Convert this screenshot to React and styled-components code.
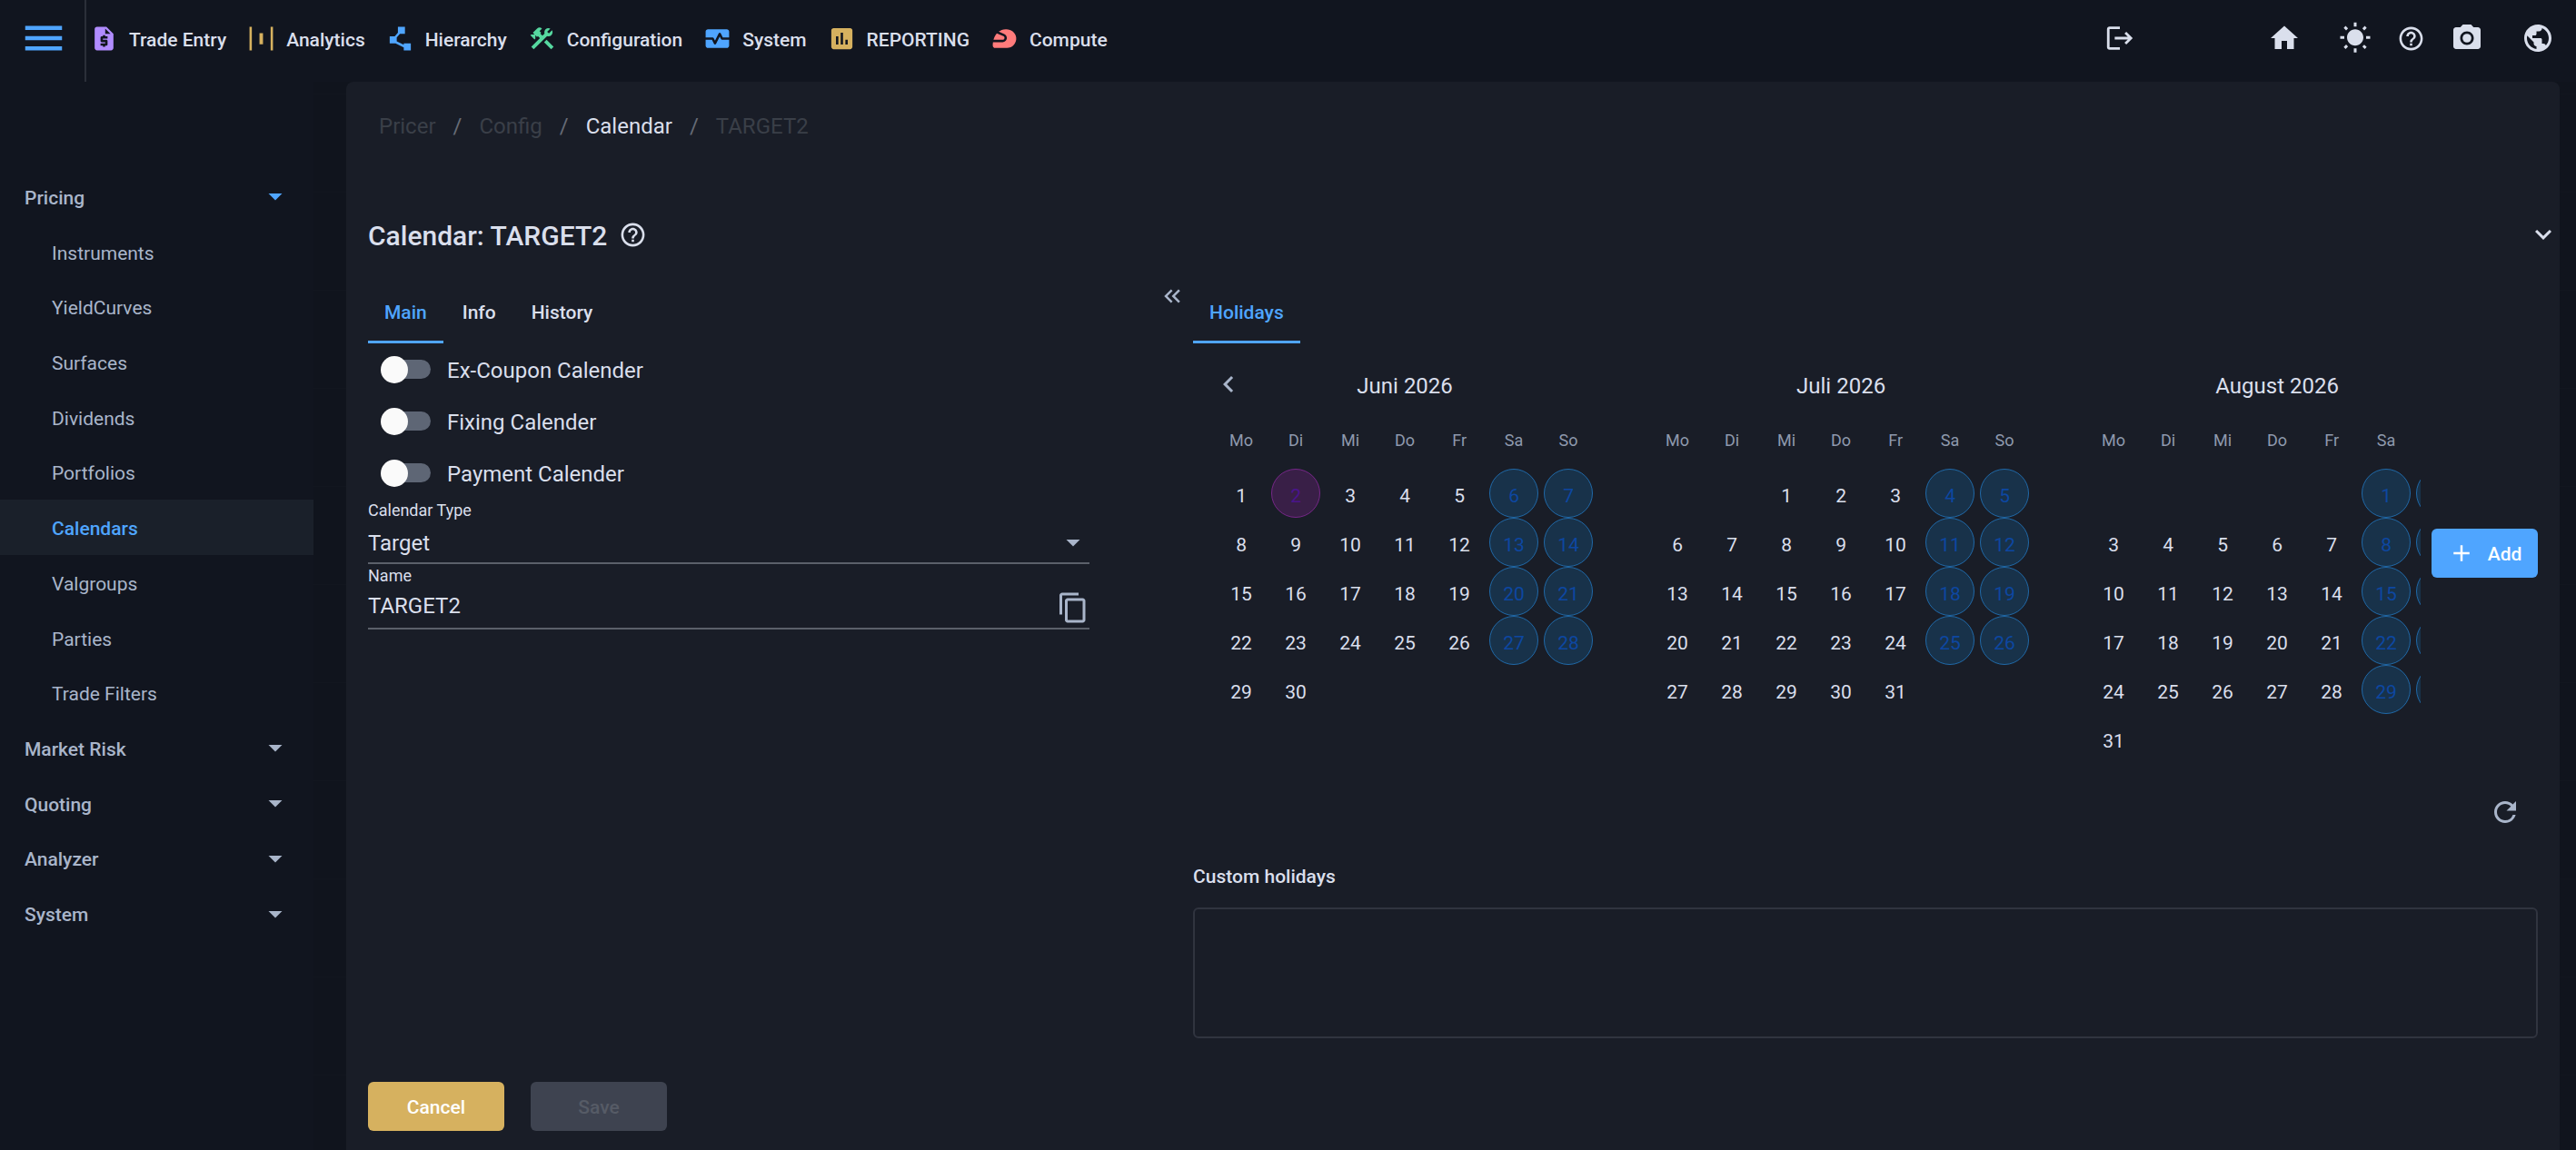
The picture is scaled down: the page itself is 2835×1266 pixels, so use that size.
import React from 'react'
import styled, { createGlobalStyle } from 'styled-components'
import {
  MdMenu,
  MdRequestQuote,
  MdConstruction,
  MdMonitorHeart,
  MdAssessment,
  MdSportsMotorsports,
  MdLogout,
  MdHome,
  MdWbSunny,
  MdHelpOutline,
  MdPhotoCamera,
  MdPublic,
  MdArrowDropDown,
  MdExpandMore,
  MdChevronLeft,
  MdContentCopy,
  MdRefresh,
  MdAdd,
  MdKeyboardDoubleArrowLeft,
} from 'react-icons/md'

const colors = {
  page: '#10141d',
  bar: '#11151f',
  panel: '#191d27',
  text: '#dadfec',
  soft: '#a9b5ca',
  muted: '#3a3f48',
  line: '#5b606a',
  blue: '#4fa5ff',
  gold: '#d6b15f',
  purple: '#b18cff',
  green: '#56d8a0',
  red: '#ff7b7b',
}

const GlobalStyle = createGlobalStyle`
  *,
  *::before,
  *::after {
    box-sizing: border-box;
  }

  body {
    margin: 0;
    background: ${colors.page};
    color: ${colors.text};
    font-family: Roboto, 'Liberation Sans', sans-serif;
    font-size: 24px;
  }

  button,
  input,
  select,
  textarea {
    font: inherit;
    color: inherit;
  }

  svg {
    display: block;
    flex: none;
  }
`

const Page = styled.div`
  display: flex;
  flex-direction: column;
  min-height: 100vh;
`

const TopBar = styled.header`
  display: flex;
  align-items: center;
  height: 90px;
  padding-right: 24px;
  padding-bottom: 6px;
  background: ${colors.bar};
`

const MenuSlot = styled.div`
  display: flex;
  align-items: center;
  height: 90px;
  margin-bottom: -6px;
  padding: 0 18px 6px 21px;
  border-right: 2px solid #2b2f39;
`

const IconButton = styled.button`
  display: flex;
  align-items: center;
  justify-content: center;
  padding: 0;
  border: 0;
  background: none;
  color: ${({ $color }) => $color || colors.text};
  cursor: pointer;
`

const AppLinks = styled.nav`
  display: flex;
  align-items: center;
  gap: 23px;
  padding-left: 4px;
`

const AppLink = styled.a`
  display: flex;
  align-items: center;
  gap: 12px;
  color: ${colors.text};
  font-size: 21px;
  font-weight: 500;
  text-decoration: none;

  svg {
    color: ${({ $color }) => $color};
  }

  span {
    padding-top: 3px;
  }
`

const Tools = styled.div`
  display: flex;
  align-items: center;
  gap: ${({ $gap }) => $gap}px;
`

const Logout = styled(IconButton)`
  margin: 0 146px 0 auto;
`

const Body = styled.div`
  display: flex;
  flex: 1;
  padding-right: 18px;
  background: repeating-linear-gradient(
    to bottom,
    transparent 0 13px,
    #12161f 13px 14px,
    transparent 14px 108px
  );
`

const Sidebar = styled.nav`
  flex: none;
  width: 345px;
  margin-right: 36px;
  padding-top: 96px;
  background: ${colors.bar};
`

const SideList = styled.ul`
  display: grid;
  grid-auto-rows: 1fr;
  height: 850px;
  margin: 0;
  padding: 0;
  list-style: none;
`

const SideLink = styled.a`
  display: flex;
  align-items: center;
  justify-content: space-between;
  height: 100%;
  padding: 0 24px 0 ${({ $sub }) => ($sub ? 57 : 27)}px;
  background: ${({ $active }) => ($active ? '#1a202a' : 'none')};
  color: ${({ $active }) => ($active ? colors.blue : colors.soft)};
  font-size: 21px;
  font-weight: ${({ $sub, $active }) => ($sub && !$active ? 400 : 500)};
  text-decoration: none;

  span {
    padding-top: 3px;
  }

  svg {
    color: ${({ $open }) => ($open ? colors.blue : colors.soft)};
  }
`

const Panel = styled.main`
  display: flex;
  flex: 1;
  flex-direction: column;
  min-width: 0;
  padding: 30px 24px 21px;
  border-radius: 8px 8px 0 0;
  background: ${colors.panel};
`

const Crumbs = styled.ol`
  display: flex;
  gap: 19px;
  margin: 0;
  padding: 0 0 0 12px;
  line-height: 38px;
  list-style: none;

  a {
    color: ${colors.text};
    text-decoration: none;
  }
`

const Crumb = styled.li`
  color: ${colors.muted};

  & + &::before {
    content: '/';
    margin-right: 19px;
    color: #666b76;
  }
`

const TitleRow = styled.div`
  display: flex;
  align-items: center;
  height: 48px;
  margin-top: 76px;
`

const Title = styled.h1`
  margin: 0 13px 0 0;
  padding-top: 3px;
  font-size: 30px;
  font-weight: 500;
`

const Toggle = styled(IconButton)`
  margin: 0 -24px 0 auto;
`

const Columns = styled.div`
  display: grid;
  grid-template-columns: 22fr 114px 41fr;
  margin-top: 24px;
`

const Column = styled.section`
  min-width: 0;
`

const Splitter = styled.div`
  display: flex;
  justify-content: flex-end;
  align-items: flex-start;
  padding: 5px 8px 0 0;
`

const Tabs = styled.div`
  display: flex;
  gap: 3px;
  height: 72px;
`

const Tab = styled.button`
  padding: 7px 18px 0;
  border: 0;
  border-bottom: 3px solid
    ${({ $active }) => ($active ? colors.blue : 'transparent')};
  background: none;
  color: ${({ $active }) => ($active ? colors.blue : colors.text)};
  font-size: 21px;
  font-weight: 500;
  cursor: pointer;
`

const SwitchRow = styled.label`
  display: flex;
  align-items: center;
  gap: 18px;
  height: 57px;
  padding-left: 18px;

  span {
    padding-top: 3px;
  }
`

const Switch = styled.input`
  display: flex;
  align-items: center;
  width: 51px;
  height: 21px;
  margin: 0;
  border-radius: 11px;
  background: #5e6675;
  appearance: none;

  &::before {
    content: '';
    width: 30px;
    height: 30px;
    margin-left: -4px;
    flex: none;
    border-radius: 50%;
    background: #fafafa;
  }
`

const Field = styled.div`
  display: flex;
  flex-direction: column;
  height: 72px;
  border-bottom: 2px solid ${colors.line};
`

const FieldLabel = styled.label`
  padding-top: 1px;
  font-size: 18px;
  line-height: 24px;
`

const FieldValue = styled.div`
  display: flex;
  flex: 1;
  align-items: center;
  min-height: 0;

  svg {
    color: ${colors.soft};
  }
`

const Select = styled.select`
  flex: 1;
  align-self: stretch;
  margin-right: -36px;
  padding: 2px 36px 0 0;
  border: 0;
  background: none;
  appearance: none;
`

const Input = styled.input`
  flex: 1;
  min-width: 0;
  padding: 0 0 4px;
  border: 0;
  background: none;
`

const Holidays = styled.div`
  display: flex;
  align-items: center;
  gap: 12px;
`

const Months = styled.div`
  display: flex;
  flex: 1;
  gap: 60px;
  min-width: 0;
  padding-left: 23px;
  overflow-x: auto;
  scrollbar-width: none;
`

const Month = styled.table`
  flex: none;
  width: 420px;
  table-layout: fixed;
  border-collapse: collapse;
  font-size: 21px;
  text-align: center;

  caption {
    padding: 6px 0 0;
    font-size: 24px;
    line-height: 82px;
  }

  th {
    height: 50px;
    padding: 0 0 14px;
    color: #8e99ad;
    font-size: 18px;
    font-weight: 400;
  }

  td {
    height: 54px;
    padding: 0 3px;
  }
`

const Caption = styled.div`
  display: grid;
  grid-template-columns: 1fr auto 1fr;
  align-items: center;

  button {
    justify-self: start;
    margin-left: -2px;
    padding-bottom: 4px;
    color: ${colors.soft};
  }
`

const dayFills = {
  plain: ['transparent', 'transparent', colors.text],
  off: ['#2069a8', '#18324a', '#0d47a1'],
  holiday: ['#762788', '#391f47', '#4a148c'],
}

const Day = styled.div`
  width: 54px;
  height: 54px;
  padding-top: 4px;
  border: 1px solid ${({ $kind }) => dayFills[$kind][0]};
  border-radius: 50%;
  background: ${({ $kind }) => dayFills[$kind][1]};
  color: ${({ $kind }) => dayFills[$kind][2]};
  line-height: 51px;
`

const Button = styled.button`
  display: flex;
  align-items: center;
  justify-content: center;
  flex: none;
  gap: 14px;
  width: ${({ $width }) => $width || 150}px;
  height: 54px;
  padding: 0;
  border: 0;
  border-radius: 6px;
  background: ${({ $bg }) => $bg};
  color: #fff;
  font-size: 21px;
  font-weight: 500;
  cursor: pointer;

  span {
    padding-top: 2px;
  }

  &:disabled {
    color: #565b66;
  }
`

const RefreshRow = styled.div`
  display: flex;
  justify-content: flex-end;
  padding: 36px 18px;
`

const SectionLabel = styled.label`
  display: block;
  padding: 2px 0 19px;
  font-size: 21px;
  font-weight: 500;
  line-height: 30px;
`

const CustomBox = styled.textarea`
  display: block;
  width: 100%;
  height: 144px;
  padding: 12px;
  border: 2px solid #30343f;
  border-radius: 6px;
  background: none;
  resize: none;
`

const Actions = styled.div`
  display: flex;
  gap: 29px;
  margin-top: auto;
`

const AnalyticsIcon = () => (
  <svg width='31' height='31' viewBox='0 0 24 24' fill='currentColor'>
    <path d='M2 2h2v20H2zM20 2h2v20h-2zM10.5 7.300h3v9.600h-3z' />
  </svg>
)

const HierarchyIcon = () => (
  <svg width='31' height='31' viewBox='0 0 24 24' fill='currentColor'>
    <path d='M15 16v1.260l-6-3v-3.170L11.700 8H16V2h-6v4.900L7.300 10H3v6h5l7 3.500V22h6v-6z' />
  </svg>
)

const apps = [
  ['Trade Entry', MdRequestQuote, colors.purple],
  ['Analytics', AnalyticsIcon, colors.gold],
  ['Hierarchy', HierarchyIcon, colors.blue],
  ['Configuration', MdConstruction, colors.green],
  ['System', MdMonitorHeart, colors.blue],
  ['REPORTING', MdAssessment, colors.gold],
  ['Compute', MdSportsMotorsports, colors.red],
]

const sideItems = [
  { label: 'Pricing', open: true },
  { label: 'Instruments', sub: true },
  { label: 'YieldCurves', sub: true },
  { label: 'Surfaces', sub: true },
  { label: 'Dividends', sub: true },
  { label: 'Portfolios', sub: true },
  { label: 'Calendars', sub: true, active: true },
  { label: 'Valgroups', sub: true },
  { label: 'Parties', sub: true },
  { label: 'Trade Filters', sub: true },
  { label: 'Market Risk' },
  { label: 'Quoting' },
  { label: 'Analyzer' },
  { label: 'System' },
]

const weekdays = ['Mo', 'Di', 'Mi', 'Do', 'Fr', 'Sa', 'So']

// offset: number of empty cells before the first day, weeks start on monday
const months = [
  { name: 'Juni 2026', offset: 0, days: 30, holidays: [2] },
  { name: 'Juli 2026', offset: 2, days: 31, holidays: [] },
  { name: 'August 2026', offset: 5, days: 31, holidays: [] },
]

const toWeeks = ({ offset, days }) =>
  Array.from({ length: 6 }, (_, week) =>
    weekdays.map((_, i) => {
      const day = week * 7 + i - offset + 1
      return day > 0 && day <= days ? day : null
    })
  )

const MonthTable = ({ month, first }) => (
  <Month>
    <caption>
      <Caption>
        {first ? (
          <IconButton aria-label='Previous month'>
            <MdChevronLeft size={36} />
          </IconButton>
        ) : (
          <i />
        )}
        {month.name}
      </Caption>
    </caption>
    <thead>
      <tr>
        {weekdays.map((day) => (
          <th key={day}>{day}</th>
        ))}
      </tr>
    </thead>
    <tbody>
      {toWeeks(month).map((week, w) => (
        <tr key={w}>
          {week.map((day, i) => {
            const weekend = i > 4 ? 'off' : 'plain'
            const kind = month.holidays.includes(day) ? 'holiday' : weekend
            return <td key={i}>{day && <Day $kind={kind}>{day}</Day>}</td>
          })}
        </tr>
      ))}
    </tbody>
  </Month>
)

const App = () => (
  <Page>
    <GlobalStyle />
    <TopBar>
      <MenuSlot>
        <IconButton aria-label='Menu' $color={colors.blue}>
          <MdMenu size={54} />
        </IconButton>
      </MenuSlot>
      <AppLinks>
        {apps.map(([label, Icon, color]) => (
          <AppLink key={label} href='#' $color={color}>
            <Icon size={31} />
            <span>{label}</span>
          </AppLink>
        ))}
      </AppLinks>
      <Logout aria-label='Logout'>
        <MdLogout size={34} />
      </Logout>
      <Tools $gap={42}>
        <IconButton aria-label='Home'>
          <MdHome size={36} />
        </IconButton>
        <Tools $gap={28}>
          <IconButton aria-label='Theme'>
            <MdWbSunny size={36} />
          </IconButton>
          <IconButton aria-label='Help'>
            <MdHelpOutline size={31} />
          </IconButton>
          <IconButton aria-label='Screenshot'>
            <MdPhotoCamera size={36} />
          </IconButton>
        </Tools>
        <IconButton aria-label='Language'>
          <MdPublic size={36} />
        </IconButton>
      </Tools>
    </TopBar>

    <Body>
      <Sidebar>
        <SideList>
          {sideItems.map(({ label, sub, active, open }, i) => (
            <li key={i}>
              <SideLink href='#' $sub={sub} $active={active} $open={open}>
                <span>{label}</span>
                {!sub && <MdArrowDropDown size={36} />}
              </SideLink>
            </li>
          ))}
        </SideList>
      </Sidebar>

      <Panel>
        <Crumbs>
          <Crumb>Pricer</Crumb>
          <Crumb>Config</Crumb>
          <Crumb>
            <a href='#'>Calendar</a>
          </Crumb>
          <Crumb>TARGET2</Crumb>
        </Crumbs>

        <TitleRow>
          <Title>Calendar: TARGET2</Title>
          <IconButton aria-label='About this page'>
            <MdHelpOutline size={31} />
          </IconButton>
          <Toggle aria-label='Collapse'>
            <MdExpandMore size={36} />
          </Toggle>
        </TitleRow>

        <Columns>
          <Column>
            <Tabs>
              <Tab $active>Main</Tab>
              <Tab>Info</Tab>
              <Tab>History</Tab>
            </Tabs>
            {['Ex-Coupon Calender', 'Fixing Calender', 'Payment Calender'].map(
              (label) => (
                <SwitchRow key={label}>
                  <Switch type='checkbox' role='switch' />
                  <span>{label}</span>
                </SwitchRow>
              )
            )}
            <Field>
              <FieldLabel htmlFor='type'>Calendar Type</FieldLabel>
              <FieldValue>
                <Select id='type'>
                  <option>Target</option>
                </Select>
                <MdArrowDropDown size={36} />
              </FieldValue>
            </Field>
            <Field>
              <FieldLabel htmlFor='name'>Name</FieldLabel>
              <FieldValue>
                <Input id='name' defaultValue='TARGET2' />
                <IconButton aria-label='Copy name'>
                  <MdContentCopy size={36} />
                </IconButton>
              </FieldValue>
            </Field>
          </Column>

          <Splitter>
            <IconButton aria-label='Collapse left side' $color={colors.soft}>
              <MdKeyboardDoubleArrowLeft size={30} />
            </IconButton>
          </Splitter>

          <Column>
            <Tabs>
              <Tab $active>Holidays</Tab>
            </Tabs>
            <Holidays>
              <Months>
                {months.map((month, i) => (
                  <MonthTable key={month.name} month={month} first={i === 0} />
                ))}
              </Months>
              <Button $bg={colors.blue} $width={117}>
                <MdAdd size={30} />
                <span>Add</span>
              </Button>
            </Holidays>
            <RefreshRow>
              <IconButton aria-label='Refresh' $color={colors.soft}>
                <MdRefresh size={36} />
              </IconButton>
            </RefreshRow>
            <SectionLabel htmlFor='custom'>Custom holidays</SectionLabel>
            <CustomBox id='custom' />
          </Column>
        </Columns>

        <Actions>
          <Button $bg={colors.gold}>
            <span>Cancel</span>
          </Button>
          <Button $bg='#3e4350' disabled>
            <span>Save</span>
          </Button>
        </Actions>
      </Panel>
    </Body>
  </Page>
)

export default App
